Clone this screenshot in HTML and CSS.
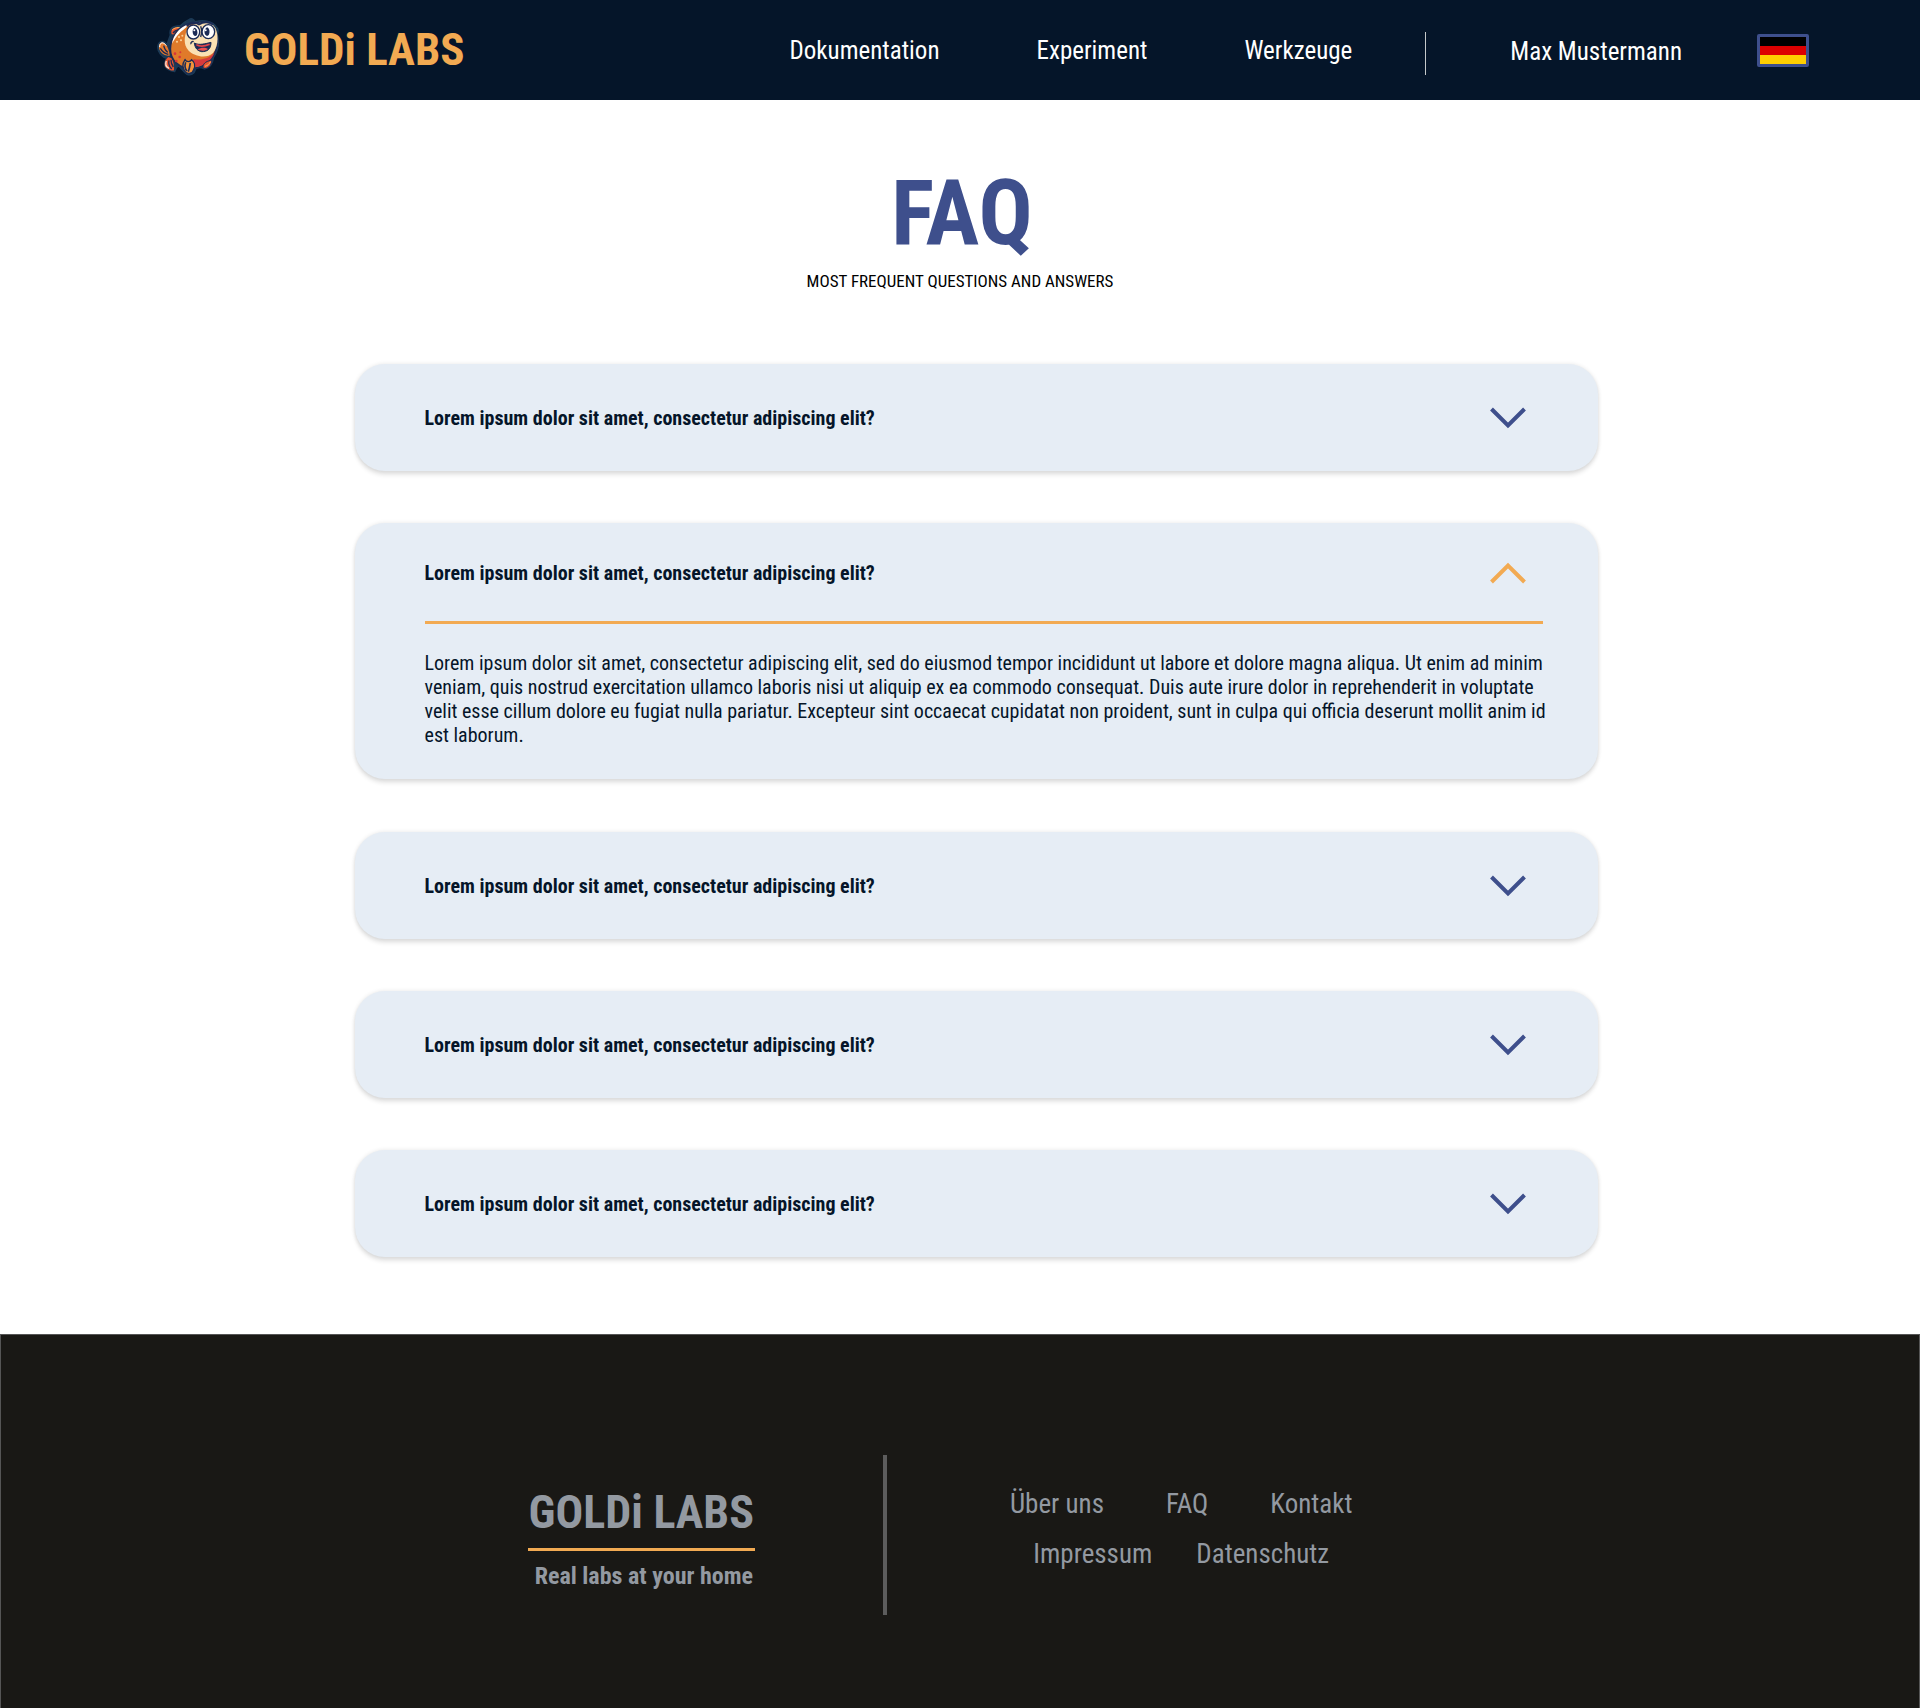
FILE: index.html
```html
<!DOCTYPE html>
<html lang="de">
<head>
<meta charset="utf-8">
<meta name="viewport" content="width=device-width, initial-scale=1">
<title>FAQ – GOLDi LABS</title>
<link rel="stylesheet" href="styles.css">
</head>
<body>
<header class="topbar">
  <a class="brand" href="#">
    <svg class="brand-fish" viewBox="20 22 190 180" aria-hidden="true">
      <!-- outline glow -->
      <g fill="#1c3a56" stroke="#1c3a56" stroke-width="4" stroke-linejoin="round">
        <path d="M62 76C58 60 66 48 92 48C104 36 112 34 118 30C124 24 132 28 136 36C164 30 190 34 200 52C206 56 206 66 203 74C210 100 206 122 192 142C190 156 184 176 164 178C156 174 146 172 138 178C134 194 122 198 112 194C100 186 94 174 86 168C80 172 78 178 75 186C58 184 42 176 45 160L50 145C38 144 24 128 24 112C26 94 40 90 52 104Z"/>
      </g>
      <!-- tail -->
      <path d="M58 138C40 138 26 124 28 108C30 94 44 96 52 110C56 118 60 128 60 138Z" fill="#e97a2b"/>
      <path d="M30 112C30 96 42 96 50 108" fill="none" stroke="#fff" stroke-width="3"/>
      <path d="M32 116C38 126 46 132 56 134M42 108C44 116 48 124 54 128" fill="none" stroke="#1b2b55" stroke-width="4"/>
      <path d="M56 142C44 152 42 168 50 174C60 182 68 184 73 182C74 170 72 156 66 146Z" fill="#e9552f"/>
      <path d="M50 154C46 164 50 172 58 176" fill="none" stroke="#f6e5da" stroke-width="4"/>
      <path d="M58 152C56 162 60 172 66 178M64 150C64 160 68 168 71 172" fill="none" stroke="#1b2b55" stroke-width="4"/>
      <!-- back fin -->
      <path d="M66 74C60 56 78 48 108 56L92 76Z" fill="#e9552f"/>
      <path d="M68 60C78 52 92 52 104 56" fill="none" stroke="#f7b25c" stroke-width="3"/>
      <path d="M70 70C78 60 90 60 98 62" fill="none" stroke="#1b2b55" stroke-width="4"/>
      <!-- body -->
      <path d="M112 44C84 54 62 84 62 118C62 152 88 176 124 176C166 178 202 140 204 94C204 62 184 40 150 38Z" fill="#e07a2a" stroke="#1b2b55" stroke-width="5"/>
      <path d="M122 174C158 174 184 158 195 128C176 150 150 152 132 148Z" fill="#d83a3d"/>
      <path d="M67 102C72 76 88 54 116 44C108 58 98 62 90 70C80 80 74 90 67 102Z" fill="#fff"/>
      <!-- face -->
      <path d="M112 62C124 40 170 30 192 48C208 66 208 108 190 130C172 148 134 142 116 122C100 104 104 80 112 62Z" fill="#fae1b3"/>
      <!-- eyes -->
      <path d="M112 50C118 38 136 36 148 44C160 36 178 36 190 44" fill="none" stroke="#1b2b55" stroke-width="6"/>
      <ellipse cx="131" cy="67" rx="19" ry="21" fill="#fff" stroke="#1b2b55" stroke-width="4"/>
      <ellipse cx="176" cy="66" rx="19" ry="21" fill="#fff" stroke="#1b2b55" stroke-width="4"/>
      <path d="M134 54C146 56 146 80 136 79C128 76 126 60 134 54Z" fill="#1b2b55"/>
      <path d="M172 53C182 55 182 79 172 79C162 76 162 59 172 53Z" fill="#1b2b55"/>
      <circle cx="134" cy="62" r="3" fill="#fff"/><circle cx="168" cy="62" r="3" fill="#fff"/>
      <path d="M153 50C156 58 156 72 153 82" fill="none" stroke="#1b2b55" stroke-width="4"/>
      <!-- mouth -->
      <path d="M134 100C148 108 168 102 184 98C184 120 172 126 156 126C144 124 136 116 134 100Z" fill="#1b2b55" stroke="#1b2b55" stroke-width="3"/>
      <path d="M140 105C152 113 168 109 180 104" fill="none" stroke="#e0454b" stroke-width="5"/>
      <path d="M144 119C154 112 168 113 175 118C168 125 150 125 144 119Z" fill="#ea5252"/>
      <path d="M124 104C122 98 128 94 132 96" fill="none" stroke="#1b2b55" stroke-width="4"/>
      <!-- scales -->
      <g fill="#fbd49a"><circle cx="88" cy="82" r="3"/><circle cx="98" cy="78" r="3"/><circle cx="94" cy="92" r="3"/><circle cx="82" cy="96" r="3"/></g>
      <g fill="#d8363a"><circle cx="76" cy="132" r="4"/><circle cx="90" cy="142" r="4"/><circle cx="80" cy="154" r="4"/><circle cx="92" cy="128" r="3"/></g>
      <!-- belly fins -->
      <path d="M106 150C96 164 100 178 108 188C116 194 128 192 132 180C138 168 134 156 126 150C122 158 110 158 106 150Z" fill="#f2933a" stroke="#1b2b55" stroke-width="4"/>
      <path d="M108 158C104 170 106 178 112 184M122 160C120 172 118 180 116 186" fill="none" stroke="#1b2b55" stroke-width="5"/>
      <path d="M168 158C160 164 158 172 162 176C174 178 184 170 187 152C182 152 174 154 168 158Z" fill="#e9552f" stroke="#1b2b55" stroke-width="3"/>
      <path d="M166 170C174 168 180 162 182 156" fill="none" stroke="#f7b25c" stroke-width="3"/>
    </svg>
    <span class="brand-name">GOLDi LABS</span>
  </a>
  <nav class="nav" aria-label="Hauptnavigation">
    <a href="#">Dokumentation</a>
    <a href="#">Experiment</a>
    <a href="#">Werkzeuge</a>
  </nav>
  <div class="account">
    <a class="user" href="#">Max Mustermann</a>
    <button class="lang" type="button" aria-label="Sprache: Deutsch">
      <span class="stripe stripe-black"></span>
      <span class="stripe stripe-red"></span>
      <span class="stripe stripe-gold"></span>
    </button>
  </div>
</header>

<main class="page">
  <h1 class="title">FAQ</h1>
  <p class="subtitle">MOST FREQUENT QUESTIONS AND ANSWERS</p>
  <div class="faq-list">
    <details class="card">
      <summary class="question"><span>Lorem ipsum dolor sit amet, consectetur adipiscing elit?</span>
        <svg class="chevron" viewBox="0 0 36 22" aria-hidden="true"><path d="M1.5 2L18 18.500L34.500 2"/></svg></summary>
    </details>
    <details class="card" open>
      <summary class="question"><span>Lorem ipsum dolor sit amet, consectetur adipiscing elit?</span>
        <svg class="chevron" viewBox="0 0 36 22" aria-hidden="true"><path d="M1.5 2L18 18.500L34.500 2"/></svg></summary>
      <p class="answer">Lorem ipsum dolor sit amet, consectetur adipiscing elit, sed do eiusmod tempor incididunt ut labore et dolore magna aliqua. Ut enim ad minim veniam, quis nostrud exercitation ullamco laboris nisi ut aliquip ex ea commodo consequat. Duis aute irure dolor in reprehenderit in voluptate velit esse cillum dolore eu fugiat nulla pariatur. Excepteur sint occaecat cupidatat non proident, sunt in culpa qui officia deserunt mollit anim id est laborum.</p>
    </details>
    <details class="card">
      <summary class="question"><span>Lorem ipsum dolor sit amet, consectetur adipiscing elit?</span>
        <svg class="chevron" viewBox="0 0 36 22" aria-hidden="true"><path d="M1.5 2L18 18.500L34.500 2"/></svg></summary>
    </details>
    <details class="card">
      <summary class="question"><span>Lorem ipsum dolor sit amet, consectetur adipiscing elit?</span>
        <svg class="chevron" viewBox="0 0 36 22" aria-hidden="true"><path d="M1.5 2L18 18.500L34.500 2"/></svg></summary>
    </details>
    <details class="card">
      <summary class="question"><span>Lorem ipsum dolor sit amet, consectetur adipiscing elit?</span>
        <svg class="chevron" viewBox="0 0 36 22" aria-hidden="true"><path d="M1.5 2L18 18.500L34.500 2"/></svg></summary>
    </details>
  </div>
</main>

<footer class="footer">
  <div class="footer-brand">
    <div class="footer-name">GOLDi LABS</div>
    <div class="footer-tagline">Real labs at your home</div>
  </div>
  <nav class="footer-nav" aria-label="Fußzeile">
    <div class="footer-row footer-row-wide">
      <a href="#">Über uns</a>
      <a href="#">FAQ</a>
      <a href="#">Kontakt</a>
    </div>
    <div class="footer-row">
      <a href="#">Impressum</a>
      <a href="#">Datenschutz</a>
    </div>
  </nav>
</footer>
</body>
</html>
```
FILE: styles.css
```css
:root {
  --navy: #051529;
  --indigo: #3e4f8c;
  --orange: #f2aa52;
  --panel: #e6edf5;
  --coal: #191815;
  --muted: #9399a1;
}

* { box-sizing: border-box; }

body {
  margin: 0;
  min-height: 100vh;
  display: flex;
  flex-direction: column;
  background: #fff;
  color: var(--navy);
  font-family: "Roboto Condensed", Roboto, sans-serif;
  font-size: 20px;
  line-height: 24px;
}

a { color: inherit; text-decoration: none; }

.topbar {
  display: flex;
  align-items: center;
  height: 100px;
  padding: 0 111px 0 156px;
  background: var(--navy);
  color: #fff;
  font-size: 25px;
  white-space: nowrap;
}

.brand { display: flex; align-items: center; gap: 24px; }
.brand-fish { width: 64px; height: 60px; margin-bottom: 6px; }
.brand-name { color: var(--orange); font-size: 45px; line-height: 52px; font-weight: 700; }

.nav { display: flex; gap: 97px; margin: 2px 0 0 auto; }

.account {
  display: flex;
  align-items: center;
  gap: 75px;
  height: 43px;
  margin: 7px 0 0 73px;
  padding: 0 0 6px 84px;
  border-left: 1px solid #c5c8c9;
}

.user { margin-top: 3px; }

.lang {
  display: flex;
  flex-direction: column;
  width: 52px;
  height: 33px;
  padding: 0;
  border: 3px solid var(--indigo);
  border-radius: 2px;
}
.stripe { flex: 1; width: 100%; }
.stripe-black { background: #000; }
.stripe-red { background: #d00; }
.stripe-gold { background: #ffce00; }

.page { flex: 1; padding: 61px 32px 76px; }

.title {
  margin: 0;
  padding-left: 4px;
  color: var(--indigo);
  font-size: 90px;
  line-height: 106px;
  font-weight: 700;
  text-align: center;
}
.subtitle {
  margin: 2px 0 0;
  color: #000;
  font-size: 17px;
  line-height: 24px;
  text-align: center;
}

.faq-list {
  display: flex;
  flex-direction: column;
  gap: 52px;
  max-width: 1275px;
  margin: 71px auto 0;
  padding-left: 32px;
}

.card {
  padding: 0 55px 0 70px;
  border-radius: 30px;
  background: var(--panel);
  box-shadow: 0 4px 4px rgba(0, 0, 0, .1), 0 0 4px rgba(0, 0, 0, .1);
}
.card[open] { margin-bottom: 1px; }

.question {
  display: flex;
  align-items: center;
  justify-content: space-between;
  height: 107px;
  padding-right: 17px;
  font-weight: 700;
  list-style: none;
  cursor: pointer;
}

.chevron {
  width: 36px;
  height: 22px;
  fill: none;
  stroke: var(--indigo);
  stroke-width: 4;
}
.card[open] .chevron { stroke: var(--orange); transform: rotate(180deg); }
.card[open] .question {
  height: 101px;
  padding-top: 2px;
  border-bottom: 3px solid var(--orange);
}

.answer { margin: 0 -6px 0 0; padding: 27px 0 32px; }

.footer {
  display: flex;
  justify-content: center;
  padding: 120px 80px 93px 40px;
  border: 1px solid #555;
  border-bottom: 0;
  background: var(--coal);
  color: var(--muted);
  font-size: 27px;
  line-height: 32px;
}

.footer-brand { padding: 29px 128px 0 0; font-weight: 700; }
.footer-name {
  padding: 0 1px 8px;
  border-bottom: 3px solid var(--orange);
  font-size: 46px;
  line-height: 56px;
}
.footer-tagline { padding: 9px 2px 0 0; font-size: 24px; text-align: right; }

.footer-nav {
  display: flex;
  flex-direction: column;
  gap: 18px;
  height: 160px;
  padding: 33px 0 0 123px;
  border-left: 4px solid #5c5c5c;
}
.footer-row { display: flex; justify-content: center; gap: 44px; }
.footer-row-wide { gap: 62px; }
```
